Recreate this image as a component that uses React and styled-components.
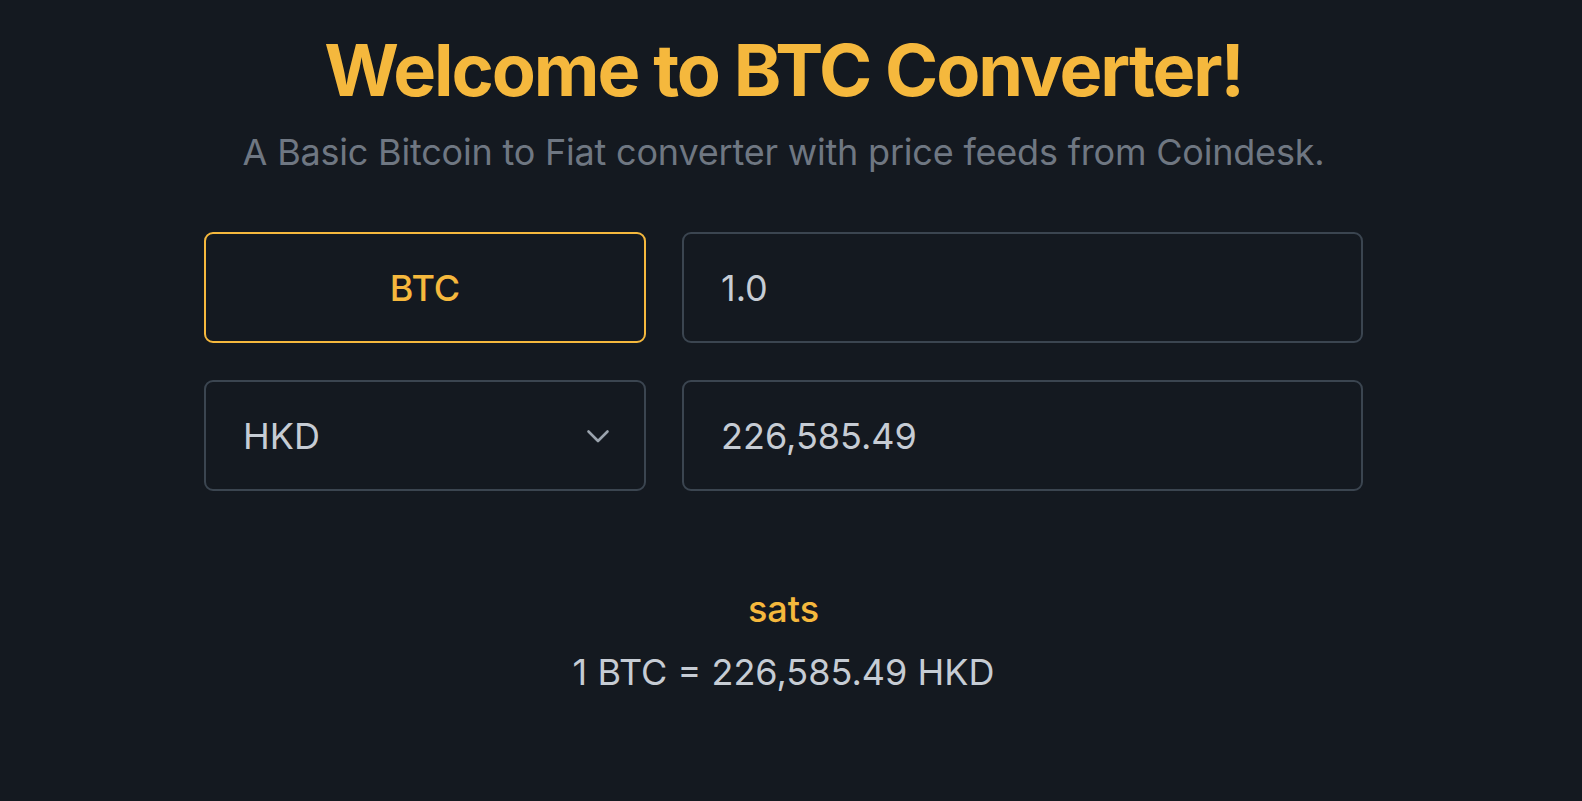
import React, { useState } from "react";
import styled, { createGlobalStyle } from "styled-components";

const accent = "#f5b83d";
const border = "#3b4550";
const textColor = "#c6ccd4";

const GlobalStyle = createGlobalStyle`
  * { box-sizing: border-box; }
  html, body {
    margin: 0;
    background: #141920;
    font-family: Inter, "Noto Sans", sans-serif;
  }
`;

const Page = styled.main`
  min-height: 801px;
  padding: 27px 15px 0 0;
  display: flex;
  flex-direction: column;
  align-items: center;
`;

const Title = styled.h1`
  margin: 0;
  font-size: 72px;
  line-height: 1.2;
  font-weight: 700;
  letter-spacing: -2.1px;
  color: ${accent};
`;

const Subtitle = styled.p`
  margin: 12px 0 0;
  font-size: 36px;
  line-height: 1.5;
  letter-spacing: -0.2px;
  color: #6f7782;
`;

const Form = styled.div`
  margin-top: 53px;
  width: 1159px;
  display: grid;
  grid-template-columns: 442px 1fr;
  grid-auto-rows: 111px;
  gap: 37px 36px;
`;

const Box = styled.div`
  position: relative;
  display: flex;
  align-items: center;
  border: 2px solid ${(p) => (p.$active ? accent : border)};
  border-radius: 9px;
  background: transparent;
`;

const UnitButton = styled.button`
  width: 100%;
  height: 100%;
  border: none;
  background: none;
  font-family: inherit;
  font-size: 36px;
  font-weight: 500;
  color: ${accent};
  cursor: pointer;
`;

const Select = styled.select`
  appearance: none;
  width: 100%;
  height: 100%;
  border: none;
  background: none;
  padding: 0 80px 0 37px;
  font-family: inherit;
  font-size: 36px;
  color: ${textColor};
  outline: none;
`;

const Chevron = styled.svg`
  position: absolute;
  right: 34px;
  top: 50%;
  margin-top: -7px;
  width: 24px;
  height: 15px;
  pointer-events: none;
`;

const Field = styled.input`
  width: 100%;
  height: 100%;
  border: none;
  background: none;
  padding: 0 37px;
  font-family: inherit;
  font-size: 36px;
  color: ${textColor};
  outline: none;
`;

const Result = styled.div`
  margin-top: 96px;
  display: flex;
  flex-direction: column;
  align-items: center;
`;

const Sats = styled.div`
  font-size: 36px;
  line-height: 1.25;
  font-weight: 500;
  color: ${accent};
`;

const Rate = styled.div`
  margin-top: 18px;
  font-size: 36px;
  line-height: 1.25;
  color: ${textColor};
`;

export default function App() {
  const [btc, setBtc] = useState("1.0");
  const [fiat, setFiat] = useState("226,585.49");
  const [currency, setCurrency] = useState("HKD");

  return (
    <>
      <GlobalStyle />
      <Page>
        <Title>Welcome to BTC Converter!</Title>
        <Subtitle>A Basic Bitcoin to Fiat converter with price feeds from Coindesk.</Subtitle>
        <Form>
          <Box $active>
            <UnitButton>BTC</UnitButton>
          </Box>
          <Box>
            <Field value={btc} onChange={(e) => setBtc(e.target.value)} />
          </Box>
          <Box>
            <Select value={currency} onChange={(e) => setCurrency(e.target.value)}>
              <option>HKD</option>
              <option>USD</option>
              <option>EUR</option>
              <option>GBP</option>
            </Select>
            <Chevron viewBox="0 0 24 15" fill="none">
              <path d="M2.5 2.5l9.5 9.5 9.5-9.5" stroke="#9aa3ad" strokeWidth="2.6" strokeLinecap="round" strokeLinejoin="round" />
            </Chevron>
          </Box>
          <Box>
            <Field value={fiat} onChange={(e) => setFiat(e.target.value)} />
          </Box>
        </Form>
        <Result>
          <Sats>sats</Sats>
          <Rate>1 BTC = 226,585.49 {currency}</Rate>
        </Result>
      </Page>
    </>
  );
}
